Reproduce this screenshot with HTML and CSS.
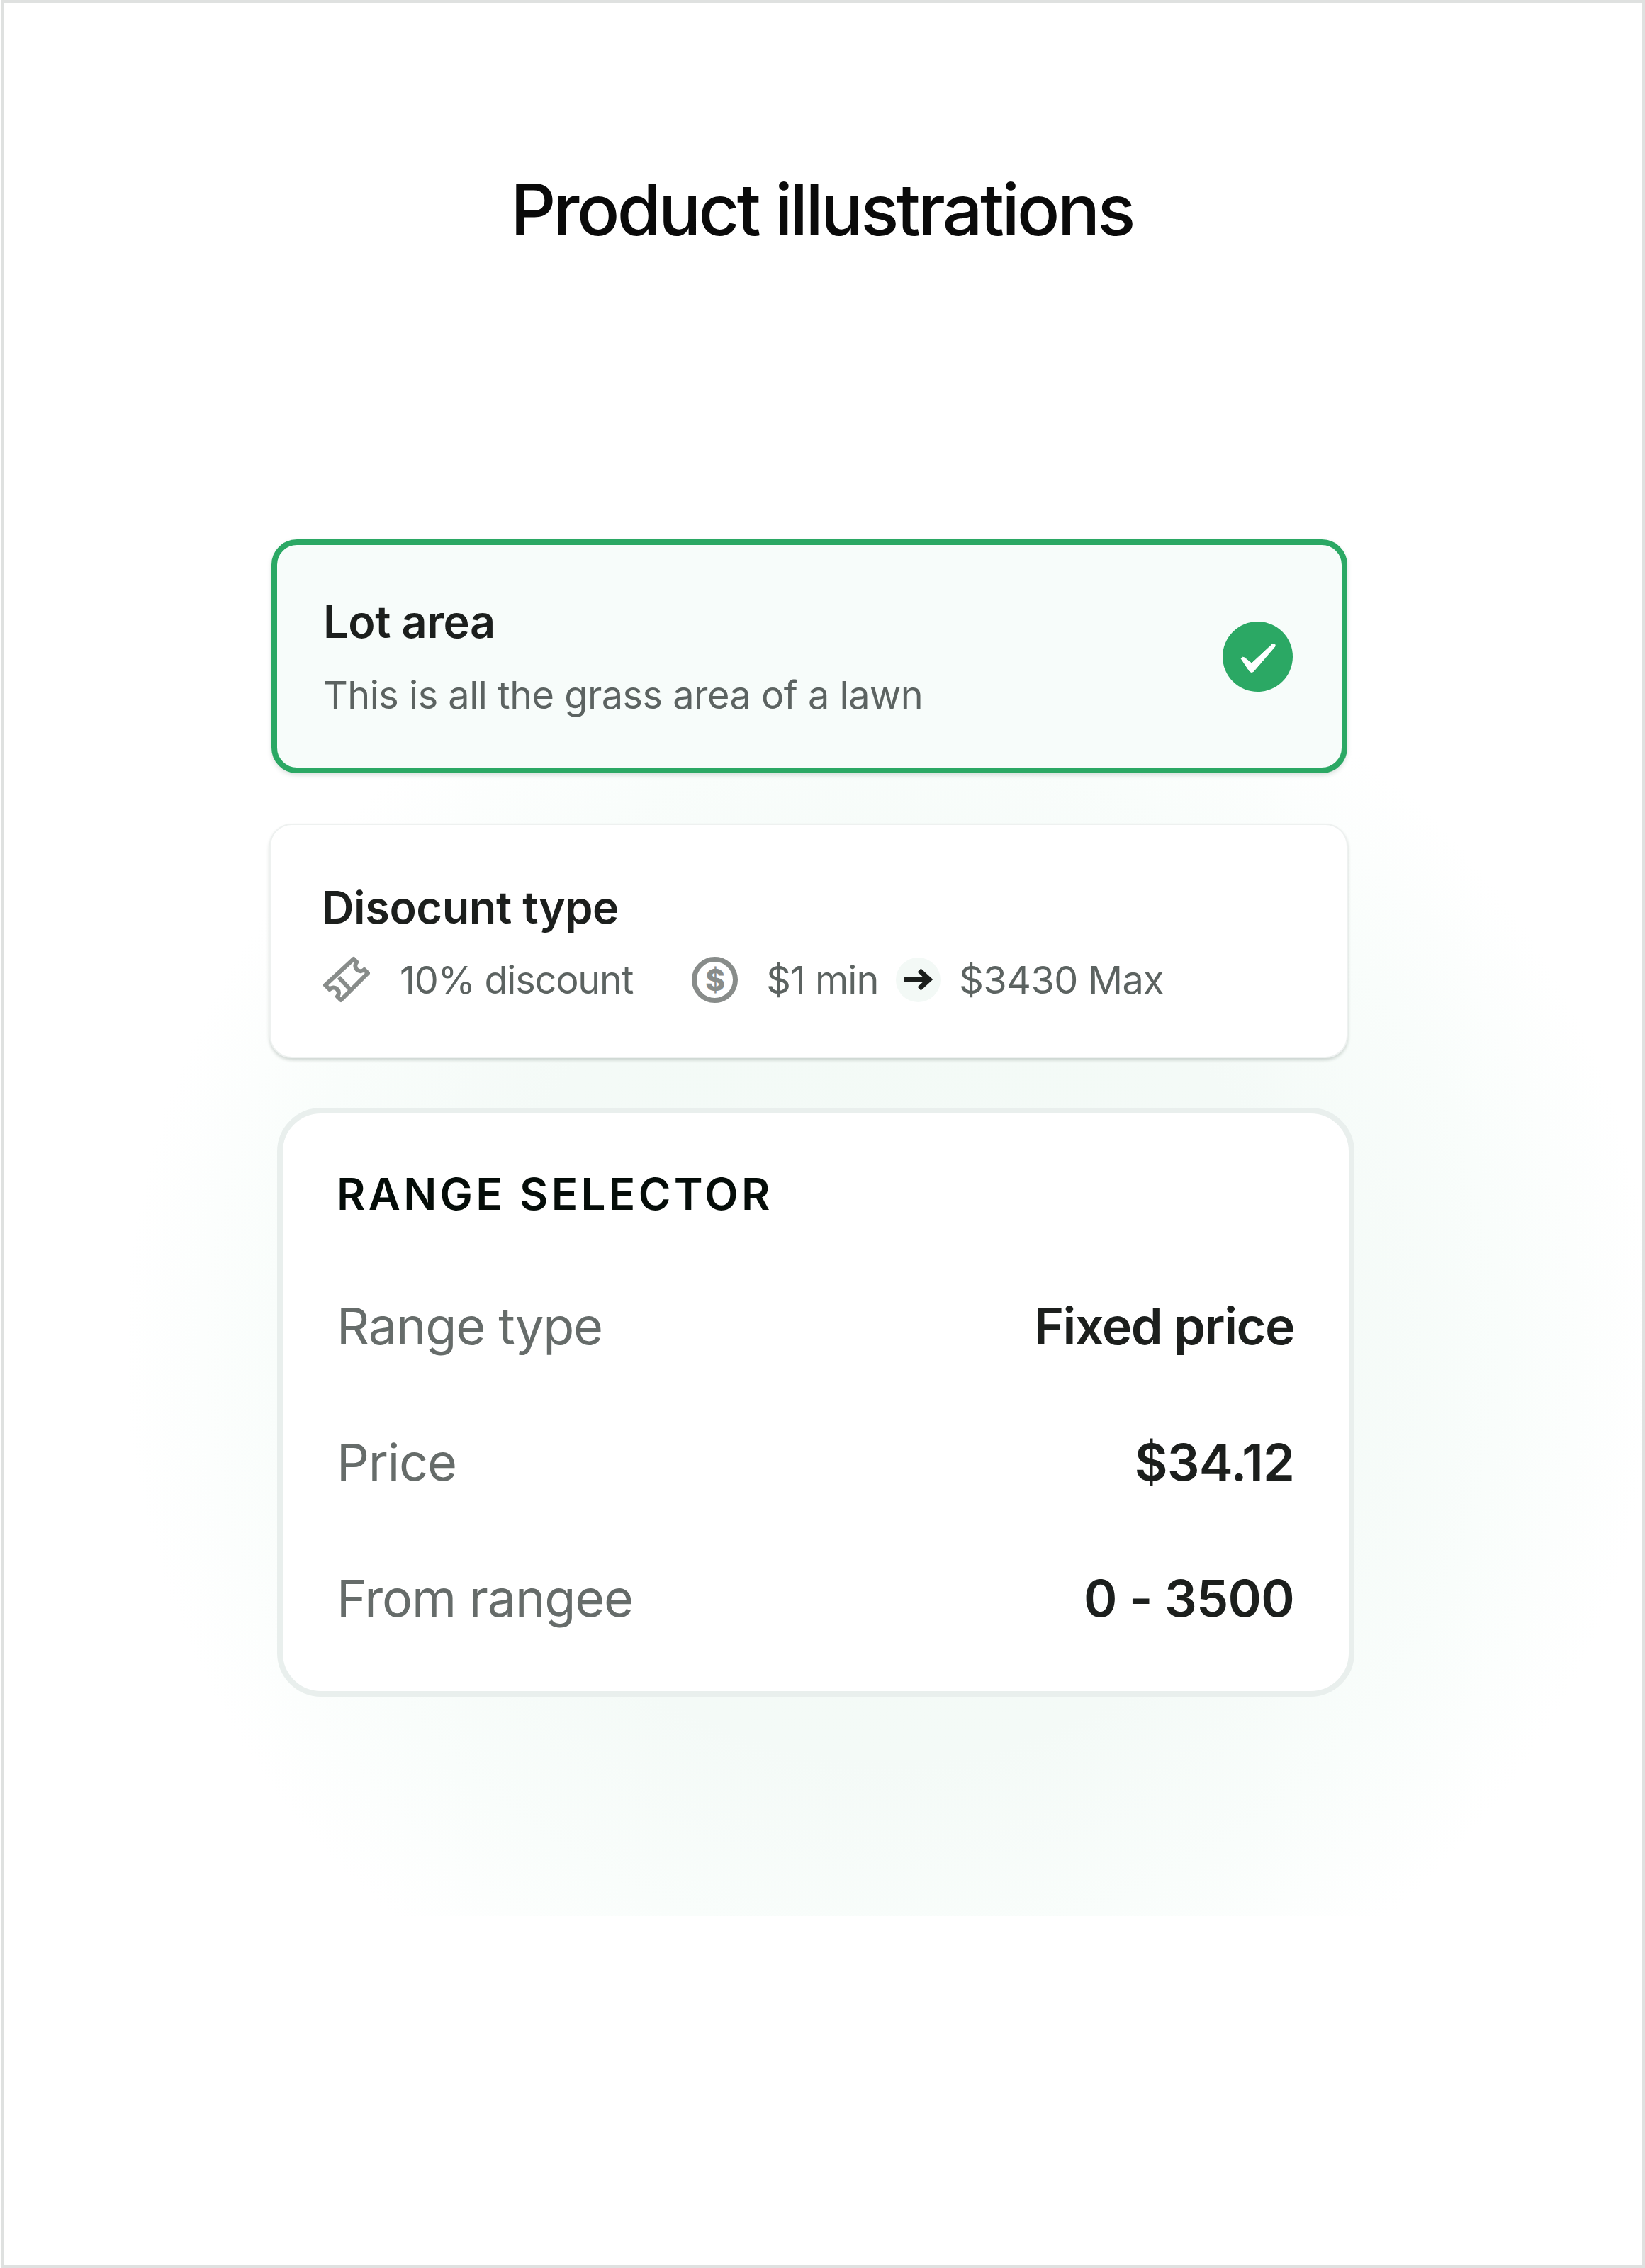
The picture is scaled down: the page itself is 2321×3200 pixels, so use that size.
FILE: index.html
```html
<!DOCTYPE html>
<html lang="en">
<head>
    <meta charset="UTF-8">
    <title>Product illustrations</title>
    <link rel="stylesheet" href="styles.css">
</head>
<body>
    <main class="frame">
        <div class="glow"></div>
        <h1 class="title">Product illustrations</h1>

        <section class="card card-selected">
            <div class="card-text">
                <h2 class="card-heading">Lot area</h2>
                <p class="card-sub">This is all the grass area of a lawn</p>
            </div>
            <svg class="check" viewBox="0 0 99 99">
                <circle cx="49.5" cy="49.5" r="49.5" fill="#2ba864"/>
                <path d="M26 52Q28 49 31 51L41 59L70 32Q75 30 74 35L44 70Q41 73 38 70Z" fill="#fff" stroke="#fff" stroke-width="1" stroke-linejoin="round"/>
            </svg>
        </section>

        <section class="card card-discount">
            <h2 class="card-heading">Disocunt type</h2>
            <div class="discount-row">
                <svg class="ticket" viewBox="0 0 66 66" fill="none" stroke="#888c8a" stroke-width="6" stroke-linejoin="round">
                    <path d="M43 4L47.5 8.5A7 7 0 0 0 58 19L63 24L25 62L20 57A7 7 0 0 0 9 47L3 41Z"/>
                    <path d="M22 30L38 47"/>
                </svg>
                <span class="discount-first">10% discount</span>
                <span class="dollar">$</span>
                <span class="discount-min">$1 min</span>
                <span class="arrow">
                    <svg viewBox="0 0 40 32" width="40" height="32" fill="none" stroke="#1c1f1d" stroke-width="7">
                        <path d="M0 16H35"/>
                        <path d="M21 3L35 16L21 29"/>
                    </svg>
                </span>
                <span class="discount-max">$3430 Max</span>
            </div>
        </section>

        <section class="card card-range">
            <h2 class="range-heading">RANGE SELECTOR</h2>
            <div class="range-row">
                <span class="range-label">Range type</span>
                <span class="range-value">Fixed price</span>
            </div>
            <div class="range-row">
                <span class="range-label">Price</span>
                <span class="range-value range-num">$34.12</span>
            </div>
            <div class="range-row">
                <span class="range-label">From rangee</span>
                <span class="range-value range-num">0 - 3500</span>
            </div>
        </section>
    </main>
</body>
</html>
```
FILE: styles.css
```css
* {
    box-sizing: border-box;
}
body {
    margin: 0;
    background: #fff;
    font-family: Inter, "Liberation Sans", sans-serif;
}
.frame {
    position: relative;
    width: 2319px;
    height: 3200px;
    margin-left: 2px;
    padding-top: 232px;
    border: 4px solid #dfe1e0;
    overflow: hidden;
}
.glow {
    position: absolute;
    top: 846px;
    left: 100px;
    width: 2213px;
    height: 1854px;
    background: radial-gradient(ellipse 1080px 1060px at 1150px 1050px, #f3faf6 0%, #f4faf7 55%, #f9fdfb 80%, #ffffff 100%);
}
.title {
    position: relative;
    margin: 0 4px 0 0;
    font-size: 100px;
    line-height: 120px;
    font-weight: 450;
    letter-spacing: -3.6px;
    color: #0a0a0a;
    text-align: center;
}
.card {
    position: relative;
    background: #fff;
}
.card-text {
    margin-top: 3px;
}
.card-heading {
    margin: 0;
    font-size: 63px;
    line-height: 76px;
    font-weight: 600;
    letter-spacing: -0.4px;
    color: #1c1f1d;
}
.card-selected {
    display: flex;
    align-items: center;
    justify-content: space-between;
    width: 1518px;
    height: 330px;
    margin: 405px 0 0 377px;
    padding: 0 69px 0 65px;
    background: #f7fcfa;
    border: 8px solid #2ba864;
    border-radius: 36px;
    box-shadow: 0 3px 6px rgba(60, 90, 75, 0.18);
}
.card-sub {
    margin: 31px 0 0;
    font-size: 54px;
    line-height: 70px;
    letter-spacing: -0.5px;
    color: #5c6361;
}
.check {
    width: 99px;
    height: 99px;
}
.card-discount {
    width: 1522px;
    height: 331px;
    margin: 71px 0 0 374px;
    padding: 78px 0 0 72px;
    border: 2px solid #eef1f0;
    border-radius: 32px;
    box-shadow: 0 3px 4px rgba(60, 80, 70, 0.22);
}
.discount-row {
    display: flex;
    align-items: center;
    height: 66px;
    margin-top: 31px;
    font-size: 54px;
    letter-spacing: -1px;
    color: #5c6361;
}
.ticket {
    width: 66px;
    height: 66px;
    margin: 0 42px 0 2px;
    flex-shrink: 0;
}
.discount-first {
    margin-right: 83px;
    letter-spacing: -1.2px;
}
.discount-min {
    margin-left: -2px;
}
.discount-max {
    letter-spacing: -0.6px;
}
.dollar {
    display: flex;
    align-items: center;
    justify-content: center;
    width: 65px;
    height: 65px;
    margin-right: 42px;
    border: 7px solid #888c8a;
    border-radius: 50%;
    font-size: 42px;
    font-weight: 800;
    color: #888c8a;
}
.arrow {
    display: flex;
    align-items: center;
    justify-content: center;
    width: 63px;
    height: 63px;
    margin: 0 26px 0 25px;
    background: #f3f9f6;
    border-radius: 50%;
}
.card-range {
    width: 1520px;
    margin: 70px 0 0 385px;
    padding: 74px 77px 36px 76px;
    border: 8px solid #e9efed;
    border-radius: 62px;
}
.range-heading {
    margin: 0 0 49px;
    font-size: 62px;
    line-height: 80px;
    font-weight: 600;
    letter-spacing: 4.3px;
    color: #050d09;
}
.range-row {
    display: flex;
    align-items: center;
    justify-content: space-between;
    height: 192px;
    font-size: 72px;
    letter-spacing: -1.2px;
}
.range-label {
    color: #666c6a;
}
.range-value {
    font-weight: 600;
    letter-spacing: -1.5px;
    color: #1c1f1d;
}
.range-num {
    letter-spacing: -0.8px;
}
```
